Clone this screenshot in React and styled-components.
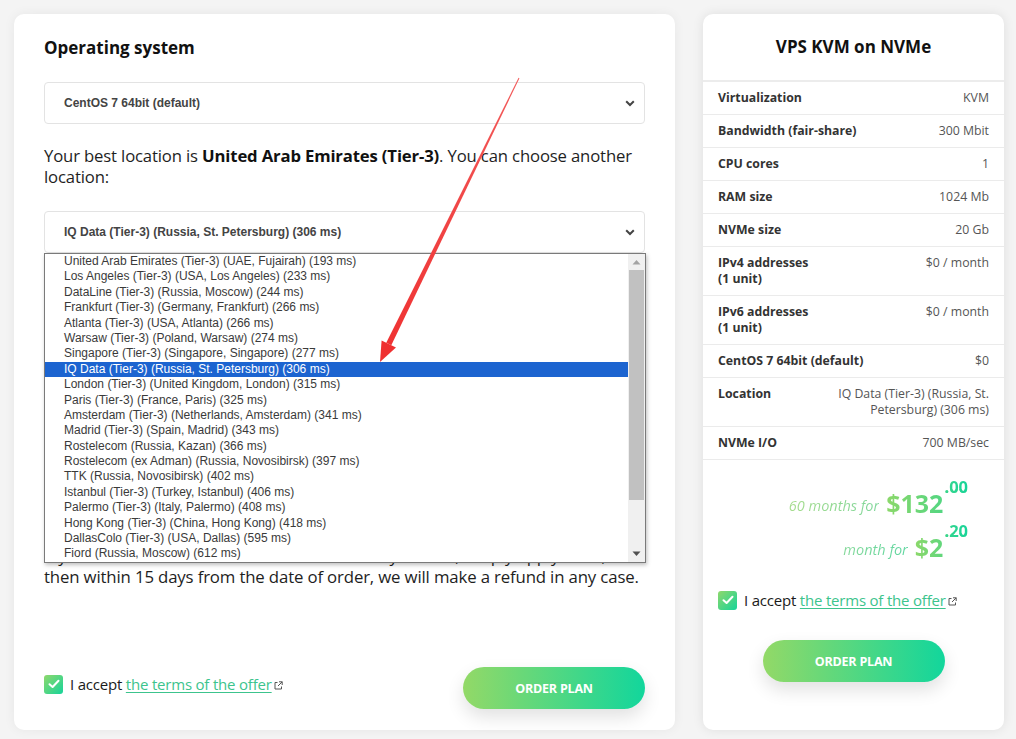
import React from "react";
import styled, { createGlobalStyle, css } from "styled-components";

const GlobalStyle = createGlobalStyle`
  html, body { margin: 0; padding: 0; background: #f4f4f4; }
  body { font-family: "Open Sans", "Noto Sans", sans-serif; color: #222; }
  * { box-sizing: border-box; }
`;

const GREEN_GRAD = "linear-gradient(90deg, #93d967 0%, #12d69c 100%)";

const Page = styled.div`
  position: relative;
  display: flex;
  gap: 28px;
  height: 739px;
  padding: 14px 12px 9px 14px;
  overflow: hidden;
`;

const Card = styled.div`
  background: #fff;
  border-radius: 10px;
  box-shadow: 0 0 12px rgba(0, 0, 0, 0.06);
  display: flex;
  flex-direction: column;
`;

const LeftCard = styled(Card)`
  width: 661px;
  padding: 22px 30px 21px 30px;
`;

const RightCard = styled(Card)`
  width: 301px;
  box-shadow: 0 0 12px rgba(0, 0, 0, 0.09);
`;

const Heading = styled.h2`
  margin: 0;
  font-size: 17px;
  line-height: 24px;
  font-weight: 700;
  color: #111;
`;

const SelectWrap = styled.div`
  position: relative;
  margin-top: ${(p) => p.$mt}px;
`;

const SelectBox = styled.div`
  height: 42px;
  border: 1px solid #e3e3e3;
  border-radius: 4px;
  display: flex;
  align-items: center;
  justify-content: space-between;
  padding: 0 9px 0 19px;
  font-family: "Liberation Sans", Arial, sans-serif;
  font-size: 12px;
  font-weight: 700;
  color: #444;
  background: #fff;
`;

const Para = styled.p`
  margin: ${(p) => p.$mt || 0}px 0 0;
  font-size: 16.7px;
  line-height: 21px;
  color: #1e1e1e;
  letter-spacing: -0.15px;
  b { font-weight: 700; color: #111; }
`;

const Dropdown = styled.div`
  position: absolute;
  left: 0;
  right: -1px;
  top: 42px;
  height: 310px;
  border: 1px solid #7a7a7a;
  background: #fff;
  box-shadow: 1px 2px 4px rgba(0, 0, 0, 0.25);
  display: flex;
  z-index: 5;
`;

const OptionList = styled.div`
  flex: 1;
  display: flex;
  flex-direction: column;
`;

const Option = styled.div`
  height: 15.4px;
  line-height: 15.4px;
  padding-left: 19px;
  font-family: "Liberation Sans", Arial, sans-serif;
  font-size: 12px;
  color: #3a3a3a;
  white-space: nowrap;
  ${(p) =>
    p.$active &&
    css`
      background: #1c64d0;
      color: #fff;
    `}
`;

const ScrollBar = styled.div`
  width: 17px;
  background: #f0f0f0;
  display: flex;
  flex-direction: column;
  align-items: center;
  padding: 0 1px;
`;

const ScrollArrow = styled.div`
  height: 16px;
  display: flex;
  align-items: center;
  justify-content: center;
`;

const Thumb = styled.div`
  width: 100%;
  height: 230px;
  background: #c1c1c1;
`;

const ScrollRest = styled.div`
  flex: 1;
`;

const Refund = styled(Para)`
  margin-top: 292px;
  font-size: 16.8px;
  white-space: nowrap;
`;

const Footer = styled.div`
  margin-top: auto;
  display: flex;
  align-items: center;
  justify-content: space-between;
`;

const Accept = styled.label`
  display: flex;
  align-items: center;
  gap: 7px;
  font-size: 15px;
  color: #1a1a1a;
  margin-top: ${(p) => p.$mt || 0}px;
  margin-bottom: ${(p) => p.$mb || 0}px;
  padding-left: ${(p) => p.$pl || 0}px;
  letter-spacing: -0.2px;
`;

const Check = styled.span`
  width: 19px;
  height: 19px;
  border-radius: 3px;
  background: linear-gradient(135deg, #8fd86c 0%, #16d49a 100%);
  display: inline-flex;
  align-items: center;
  justify-content: center;
  flex: none;
`;

const TermsLink = styled.a`
  color: #3cc48d;
  text-decoration: underline;
  text-underline-offset: 2px;
  text-decoration-thickness: 1px;
  display: inline-flex;
  align-items: center;
  gap: 2px;
  svg { margin-top: 2px; }
`;

const OrderButton = styled.button`
  width: 182px;
  height: 42px;
  border: none;
  border-radius: 21px;
  background: ${GREEN_GRAD};
  color: #fff;
  font-family: "Open Sans", sans-serif;
  font-weight: 700;
  font-size: 12.5px;
  letter-spacing: -0.2px;
  box-shadow: 0 8px 18px rgba(0, 0, 0, 0.12);
  cursor: pointer;
  margin-top: ${(p) => p.$mt || 0}px;
  align-self: ${(p) => (p.$center ? "center" : "auto")};
`;

const PlanHeader = styled.div`
  padding: 22px 15px 22px;
  border-bottom: 2px solid #ececec;
  text-align: center;
  font-size: 17px;
  line-height: 22px;
  font-weight: 700;
  color: #111;
`;

const Row = styled.div`
  display: flex;
  justify-content: space-between;
  align-items: flex-start;
  gap: 10px;
  padding: 8px 15px;
  border-bottom: 1px solid #ebebeb;
  font-size: 12.3px;
  line-height: 16px;
`;

const Label = styled.div`
  font-weight: 700;
  color: #333;
  white-space: nowrap;
`;

const Value = styled.div`
  color: #555;
  text-align: right;
  max-width: ${(p) => p.$max || "none"};
`;

const Prices = styled.div`
  padding: 19px 36px 0 0;
  display: flex;
  flex-direction: column;
  align-items: flex-end;
`;

const PriceLine = styled.div`
  height: 44px;
  display: flex;
  align-items: flex-end;
  padding-bottom: 6px;
  gap: 7px;
`;

const gradText = css`
  background: ${(p) => p.$grad};
  -webkit-background-clip: text;
  background-clip: text;
  color: transparent;
`;

const PriceLabel = styled.span`
  font-style: italic;
  font-size: 14.5px;
  line-height: 18px;
  margin-bottom: 2px;
  ${gradText}
`;

const Amount = styled.span`
  font-weight: 700;
  font-size: 25px;
  line-height: 28px;
  display: inline-flex;
  align-items: flex-start;
  ${gradText}
`;

const Cents = styled.span`
  font-size: 16.5px;
  line-height: 18px;
  font-weight: 700;
  margin-left: 1px;
  margin-top: -11px;
  background: linear-gradient(90deg, #3ad58c, #16d49a);
  -webkit-background-clip: text;
  background-clip: text;
  color: transparent;
`;

const ArrowLayer = styled.svg`
  position: absolute;
  left: 0;
  top: 0;
  pointer-events: none;
  z-index: 10;
`;

const locations = [
  "United Arab Emirates (Tier-3) (UAE, Fujairah) (193 ms)",
  "Los Angeles (Tier-3) (USA, Los Angeles) (233 ms)",
  "DataLine (Tier-3) (Russia, Moscow) (244 ms)",
  "Frankfurt (Tier-3) (Germany, Frankfurt) (266 ms)",
  "Atlanta (Tier-3) (USA, Atlanta) (266 ms)",
  "Warsaw (Tier-3) (Poland, Warsaw) (274 ms)",
  "Singapore (Tier-3) (Singapore, Singapore) (277 ms)",
  "IQ Data (Tier-3) (Russia, St. Petersburg) (306 ms)",
  "London (Tier-3) (United Kingdom, London) (315 ms)",
  "Paris (Tier-3) (France, Paris) (325 ms)",
  "Amsterdam (Tier-3) (Netherlands, Amsterdam) (341 ms)",
  "Madrid (Tier-3) (Spain, Madrid) (343 ms)",
  "Rostelecom (Russia, Kazan) (366 ms)",
  "Rostelecom (ex Adman) (Russia, Novosibirsk) (397 ms)",
  "TTK (Russia, Novosibirsk) (402 ms)",
  "Istanbul (Tier-3) (Turkey, Istanbul) (406 ms)",
  "Palermo (Tier-3) (Italy, Palermo) (408 ms)",
  "Hong Kong (Tier-3) (China, Hong Kong) (418 ms)",
  "DallasColo (Tier-3) (USA, Dallas) (595 ms)",
  "Fiord (Russia, Moscow) (612 ms)",
];

const specs = [
  ["Virtualization", "KVM"],
  ["Bandwidth (fair-share)", "300 Mbit"],
  ["CPU cores", "1"],
  ["RAM size", "1024 Mb"],
  ["NVMe size", "20 Gb"],
  [["IPv4 addresses", "(1 unit)"], "$0 / month"],
  [["IPv6 addresses", "(1 unit)"], "$0 / month"],
  ["CentOS 7 64bit (default)", "$0"],
  ["Location", "IQ Data (Tier-3) (Russia, St. Petersburg) (306 ms)", "155px"],
  ["NVMe I/O", "700 MB/sec"],
];

const Chevron = () => (
  <svg width="10" height="7" viewBox="0 0 10 7">
    <path d="M1.2 1.3 L5 5 L8.8 1.3" fill="none" stroke="#444" strokeWidth="2" />
  </svg>
);

const Tick = () => (
  <svg width="12" height="10" viewBox="0 0 12 10">
    <path d="M1.5 5.2 L4.6 8 L10.5 1.8" fill="none" stroke="#fff" strokeWidth="2" strokeLinecap="round" strokeLinejoin="round" />
  </svg>
);

const ExtIcon = () => (
  <svg width="9" height="9" viewBox="0 0 9 9">
    <path d="M3.5 1.5 H1 V8 H7.5 V5.5" fill="none" stroke="#555" strokeWidth="1" />
    <path d="M5 0.8 H8.2 V4 M8.2 0.8 L4 5" fill="none" stroke="#555" strokeWidth="1" />
  </svg>
);

const Terms = ({ mt, mb, pl }) => (
  <Accept $mt={mt} $mb={mb} $pl={pl}>
    <Check>
      <Tick />
    </Check>
    <span>
      I accept{" "}
      <TermsLink href="#">
        the terms of the offer
        <ExtIcon />
      </TermsLink>
    </span>
  </Accept>
);

const TriUp = () => (
  <svg width="9" height="6" viewBox="0 0 9 6">
    <path d="M0.5 5.5 L4.5 1 L8.5 5.5 Z" fill="#a3a3a3" />
  </svg>
);
const TriDown = () => (
  <svg width="9" height="6" viewBox="0 0 9 6">
    <path d="M0.5 0.5 L4.5 5 L8.5 0.5 Z" fill="#505050" />
  </svg>
);

const RedArrow = () => {
  const top = [519, 78];
  const tip = [380, 362];
  const dx = tip[0] - top[0];
  const dy = tip[1] - top[1];
  const len = Math.hypot(dx, dy);
  const u = [dx / len, dy / len];
  const n = [-u[1], u[0]];
  const headLen = 20;
  const headHalf = 8;
  const base = [tip[0] - u[0] * headLen, tip[1] - u[1] * headLen];
  const p = (pt, k, w) => `${pt[0] + n[0] * w * k},${pt[1] + n[1] * w * k}`;
  const shaft = [p(top, 1, 0.5), p(base, 1, 2.8), p(base, -1, 2.8), p(top, -1, 0.5)].join(" ");
  const head = [p(base, 1, headHalf), `${tip[0]},${tip[1]}`, p(base, -1, headHalf)].join(" ");
  return (
    <ArrowLayer width="1016" height="739" viewBox="0 0 1016 739">
      <defs>
        <linearGradient id="ar" x1="519" y1="78" x2="380" y2="361" gradientUnits="userSpaceOnUse">
          <stop offset="0" stopColor="#f25a5a" />
          <stop offset="1" stopColor="#ef3030" />
        </linearGradient>
      </defs>
      <polygon points={shaft} fill="url(#ar)" />
      <polygon points={head} fill="#ef3030" />
    </ArrowLayer>
  );
};

export default function App() {
  return (
    <>
      <GlobalStyle />
      <Page>
        <LeftCard>
          <Heading>Operating system</Heading>
          <SelectWrap $mt={22}>
            <SelectBox>
              <span>CentOS 7 64bit (default)</span>
              <Chevron />
            </SelectBox>
          </SelectWrap>
          <Para $mt={21}>
            Your best location is <b>United Arab Emirates (Tier-3)</b>. You can choose another location:
          </Para>
          <SelectWrap $mt={24}>
            <SelectBox>
              <span>IQ Data (Tier-3) (Russia, St. Petersburg) (306 ms)</span>
              <Chevron />
            </SelectBox>
            <Dropdown>
              <OptionList>
                {locations.map((l, i) => (
                  <Option key={l} $active={i === 7}>
                    {l}
                  </Option>
                ))}
              </OptionList>
              <ScrollBar>
                <ScrollArrow>
                  <TriUp />
                </ScrollArrow>
                <Thumb />
                <ScrollRest />
                <ScrollArrow>
                  <TriDown />
                </ScrollArrow>
              </ScrollBar>
            </Dropdown>
          </SelectWrap>
          <Refund>
            If you are not satisfied with our service for any reason, simply apply to us,
            <br />
            then within 15 days from the date of order, we will make a refund in any case.
          </Refund>
          <Footer>
            <Terms mb={8} />
            <OrderButton>ORDER PLAN</OrderButton>
          </Footer>
        </LeftCard>

        <RightCard>
          <PlanHeader>VPS KVM on NVMe</PlanHeader>
          {specs.map(([label, value, max], i) => (
            <Row key={i}>
              <Label>
                {Array.isArray(label) ? (
                  <>
                    {label[0]}
                    <br />
                    {label[1]}
                  </>
                ) : (
                  label
                )}
              </Label>
              <Value $max={max}>{value}</Value>
            </Row>
          ))}
          <Prices>
            <PriceLine>
              <PriceLabel $grad="linear-gradient(90deg,#a6dc8c,#7fd69a)">60 months for</PriceLabel>
              <Amount $grad="linear-gradient(90deg,#8cd86a,#3ad58c)">
                $132
                <Cents>.00</Cents>
              </Amount>
            </PriceLine>
            <PriceLine>
              <PriceLabel $grad="linear-gradient(90deg,#86d99a,#5fd6a0)">month for</PriceLabel>
              <Amount $grad="linear-gradient(90deg,#8cd86a,#3ad58c)">
                $2
                <Cents>.20</Cents>
              </Amount>
            </PriceLine>
          </Prices>
          <Terms mt={23} pl={15} />
          <OrderButton $mt={30} $center>
            ORDER PLAN
          </OrderButton>
        </RightCard>
        <RedArrow />
      </Page>
    </>
  );
}
